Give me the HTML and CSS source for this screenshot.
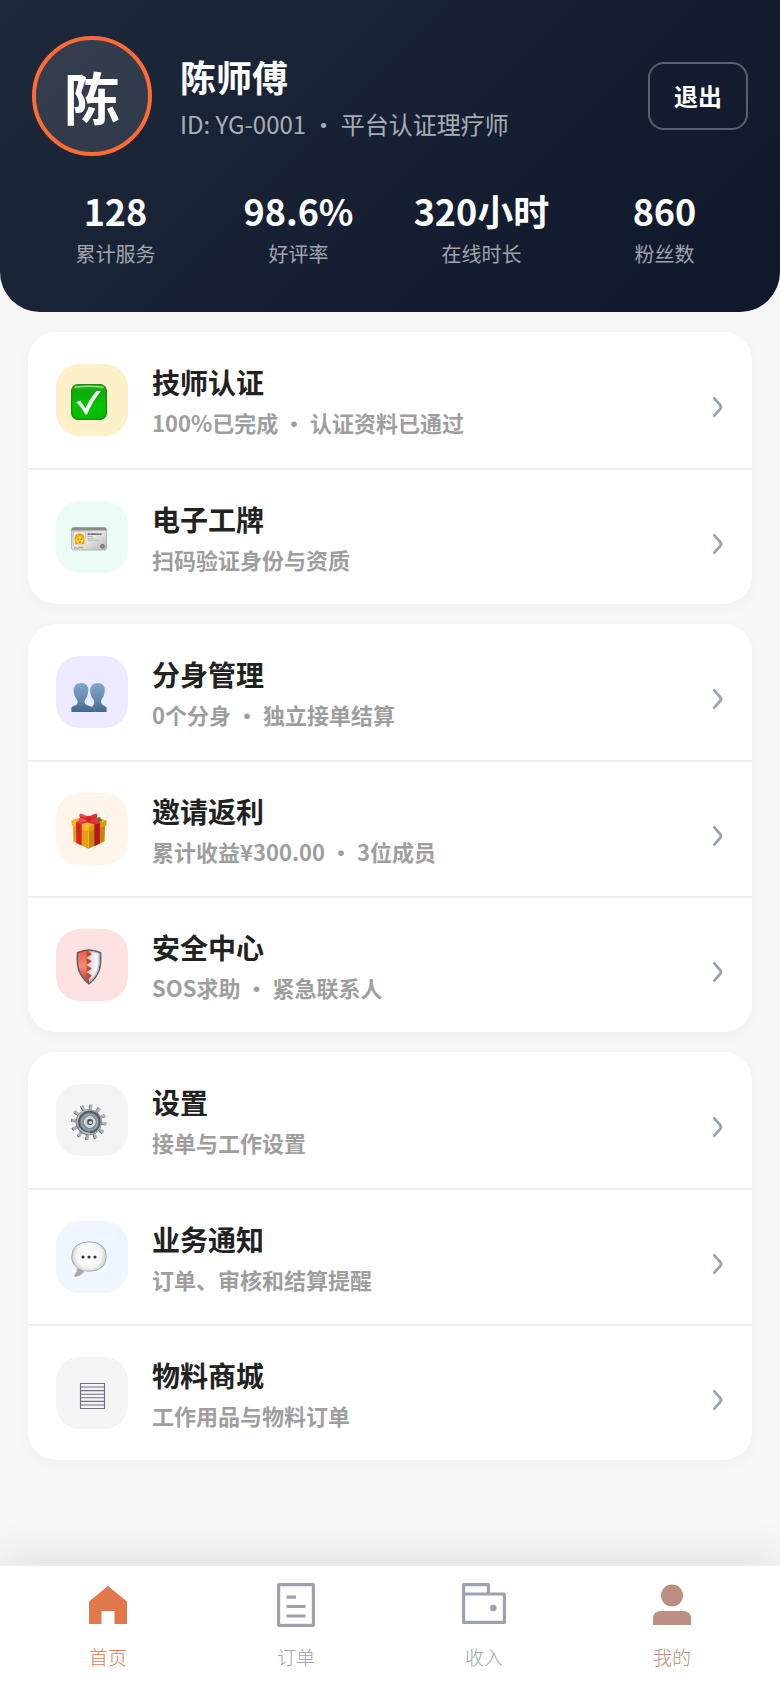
FILE: index.html
```html
<!DOCTYPE html>
<html lang="zh-CN">
<head>
    <meta charset="UTF-8">
    <meta name="viewport" content="width=device-width, initial-scale=1.0">
    <title>我的</title>
    <link rel="stylesheet" href="styles.css">
</head>
<body>
    <!-- Shared chevron -->
    <svg class="sprite" aria-hidden="true">
        <symbol id="chevron" viewBox="0 0 12 22">
            <path d="M2.3 2.3 Q5 5.5 8.2 9 Q9.7 11 8.2 13 Q5 16.5 2.3 19.7" fill="none" stroke="#9ca3af" stroke-width="2.8" stroke-linecap="round" stroke-linejoin="round"/>
        </symbol>
    </svg>

    <header class="profile">
        <div class="profile-top">
            <div class="avatar">陈</div>
            <div class="profile-info">
                <h1 class="profile-name">陈师傅</h1>
                <p class="profile-id">ID: YG-0001 ・ 平台认证理疗师</p>
            </div>
            <button class="logout-btn" type="button">退出</button>
        </div>
        <div class="stats">
            <div class="stat"><strong>128</strong><span>累计服务</span></div>
            <div class="stat"><strong>98.6%</strong><span>好评率</span></div>
            <div class="stat"><strong>320小时</strong><span>在线时长</span></div>
            <div class="stat"><strong>860</strong><span>粉丝数</span></div>
        </div>
    </header>

    <main class="menu">
        <section class="card">
            <a class="row" href="#cert">
                <span class="tile tile-yellow">
                    <svg viewBox="0 0 36 36" aria-hidden="true">
                        <defs>
                            <linearGradient id="okFill" x1="0" y1="0" x2="0" y2="1">
                                <stop offset="0" stop-color="#35b52f"/>
                                <stop offset=".2" stop-color="#10a80d"/>
                                <stop offset=".6" stop-color="#00c400"/>
                                <stop offset="1" stop-color="#00b900"/>
                            </linearGradient>
                        </defs>
                        <rect x=".6" y=".6" width="34.8" height="34.8" rx="6.5" fill="url(#okFill)" stroke="#168a13" stroke-width="1.2"/>
                        <path d="M4 3.2 Q18 1.2 32 3.2" fill="none" stroke="#8fdc86" stroke-width="1.6" stroke-linecap="round"/>
                        <path d="M5.5 18.2 L9.2 16.4 L14.6 24.2 Q19 14 25.8 7 L30 7 Q21.5 17 16 30.5 L14.4 30.5 Q10.5 23 5.5 18.2Z" fill="#fff"/>
                    </svg>
                </span>
                <span class="row-text">
                    <span class="row-title">技师认证</span>
                    <span class="row-sub">100%已完成 ・ 认证资料已通过</span>
                </span>
                <svg class="chevron" aria-hidden="true"><use href="#chevron"/></svg>
            </a>
            <a class="row" href="#badge">
                <span class="tile tile-mint">
                    <svg viewBox="0 0 36 36" aria-hidden="true">
                        <defs>
                            <linearGradient id="idFill" x1="0" y1="0" x2="1" y2="1">
                                <stop offset="0" stop-color="#c2c2c2"/>
                                <stop offset=".5" stop-color="#e9e9e9"/>
                                <stop offset="1" stop-color="#b5b5b5"/>
                            </linearGradient>
                        </defs>
                        <rect x=".5" y="6.5" width="35" height="22.5" rx="2" fill="url(#idFill)" stroke="#aaa" stroke-width=".8"/>
                        <path d="M.6 9.5 V8.4 Q.6 6.4 2.5 6.4 H33.5 Q35.4 6.4 35.4 8.4 V9.5Z" fill="#8c8c8c"/>
                        <rect x="2.6" y="11" width="12" height="14" fill="#fafafa" stroke="#bbb" stroke-width=".5"/>
                        <path d="M3.8 23.5 V17 Q3.8 12.3 8.7 12.3 Q13.6 12.3 13.6 17 V23.5Z" fill="#eda50e"/>
                        <ellipse cx="8.7" cy="18.4" rx="3.6" ry="4.2" fill="#ffd33d"/>
                        <path d="M5.2 16.8 Q7 15.8 8.7 14.3 Q10.5 16 12.2 16.8" fill="none" stroke="#d98a08" stroke-width=".9"/>
                        <circle cx="7.3" cy="18" r=".6" fill="#6b3e08"/>
                        <circle cx="10.2" cy="18" r=".6" fill="#6b3e08"/>
                        <path d="M7.4 20.7 Q8.7 21.7 10 20.7" fill="none" stroke="#b03a20" stroke-width=".7"/>
                        <path d="M16.5 13.2 H30.5" stroke="#444" stroke-width="1.2" stroke-dasharray="3 .4 5 .3"/>
                        <path d="M16.5 15.5 H22 M16.5 17.4 H23 M16.5 19.2 H28" stroke="#999" stroke-width=".6"/>
                        <path d="M3 27.3 L5 26.6 L6 27.4 L8.5 26.6 L12 26.9" fill="none" stroke="#555" stroke-width=".6"/>
                        <circle cx="31.5" cy="25.3" r="2.4" fill="#777"/>
                        <circle cx="31.5" cy="25.3" r="1" fill="#999"/>
                    </svg>
                </span>
                <span class="row-text">
                    <span class="row-title">电子工牌</span>
                    <span class="row-sub">扫码验证身份与资质</span>
                </span>
                <svg class="chevron" aria-hidden="true"><use href="#chevron"/></svg>
            </a>
        </section>

        <section class="card">
            <a class="row" href="#clones">
                <span class="tile tile-violet">
                    <svg viewBox="0 -4 36 36" aria-hidden="true">
                        <defs>
                            <linearGradient id="userFill" x1="0" y1="0" x2="0" y2="1">
                                <stop offset="0" stop-color="#7fa8c9"/>
                                <stop offset=".6" stop-color="#6089ac"/>
                                <stop offset="1" stop-color="#41658b"/>
                            </linearGradient>
                        </defs>
                        <path d="M26.5 3 Q34 3 33.8 11 Q33.4 16.5 30.2 20.2 Q29.6 23.8 32 25 L35.6 27.2 V32 H16 L22.5 25 Q24 23 22.8 20.2 Q19.4 16.5 19.2 11 Q19.2 3 26.5 3Z" fill="url(#userFill)"/>
                        <path d="M10 3 Q17.6 3 17.4 11 Q17 16.5 13.8 20.2 Q13 23.5 15.4 24.8 L21.4 27.2 Q24.2 28.8 24.4 32 H.4 V28 Q.4 26.8 2 26.2 L5.2 24.8 Q7.2 23.5 6.2 20.2 Q3 16.5 2.6 11 Q2.6 3 10 3Z" fill="url(#userFill)"/>
                        <path d="M19.5 26.2 Q23.8 27.6 24.6 31.8" fill="none" stroke="#7595b2" stroke-width=".6"/>
                    </svg>
                </span>
                <span class="row-text">
                    <span class="row-title">分身管理</span>
                    <span class="row-sub">0个分身 ・ 独立接单结算</span>
                </span>
                <svg class="chevron" aria-hidden="true"><use href="#chevron"/></svg>
            </a>
            <a class="row" href="#invite">
                <span class="tile tile-orange">
                    <svg viewBox="0 0 36 36" aria-hidden="true">
                        <path d="M2 12 L17.5 18 V35.8 L2.4 28.5Z" fill="#e2a00d"/>
                        <path d="M17.5 18 L34 12 L33.6 28.3 L17.5 35.8Z" fill="#c98406"/>
                        <path d="M.4 7.2 L17.5 2.5 L35.6 7.2 L17.8 13.4Z" fill="#f0b41c"/>
                        <path d="M.4 7.2 L17.5 13.4 V18.6 L.8 12.6Z" fill="#f5b81b"/>
                        <path d="M17.5 13.4 L35.6 7.2 L35.3 12.6 L17.5 18.6Z" fill="#dc9a0b"/>
                        <path d="M5 9 L10.6 11 V32.5 L5.4 30Z" fill="#d91f2b"/>
                        <path d="M23.3 11.4 L29 9.4 L28.8 30.6 L23.3 33.2Z" fill="#b5151f"/>
                        <path d="M5 9 L22 4.5 L27 5.8 L10.6 11Z M12 5 L29 9.4 L23.3 11.4 L7 6.6Z" fill="#e32735"/>
                        <path d="M24 5.2 L29 3.9 L31 8 L27 9.3Z" fill="#4f7620"/>
                        <path d="M17.8 4.2 Q12 .2 8.7 .7 Q7.7 2.2 9 4.2 Q8.4 7.2 6.9 9 Q11.8 10.8 17.8 6.8Z" fill="#f04450"/>
                        <path d="M17.5 4.2 Q22.6 .1 26.1 .8 Q27.1 2.2 25.7 4.2 Q26.8 7 28.4 9.1 Q22.6 10.6 17.5 7Z" fill="#e83642"/>
                        <path d="M9.5 4 Q12.5 5.6 16.5 5.4 M25.6 4 Q22.3 5.6 18.6 5.4" fill="none" stroke="#bb1525" stroke-width=".9"/>
                        <ellipse cx="17.6" cy="6" rx="2.6" ry="3" fill="#d61f30"/>
                        <path d="M17.5 19 V35" stroke="#f2c04a" stroke-width=".6"/>
                    </svg>
                </span>
                <span class="row-text">
                    <span class="row-title">邀请返利</span>
                    <span class="row-sub">累计收益¥300.00 ・ 3位成员</span>
                </span>
                <svg class="chevron" aria-hidden="true"><use href="#chevron"/></svg>
            </a>
            <a class="row" href="#safety">
                <span class="tile tile-red">
                    <svg viewBox="0 0 36 36" aria-hidden="true">
                        <defs>
                            <linearGradient id="shieldL" x1="0" y1="0" x2="0" y2="1">
                                <stop offset="0" stop-color="#e85c49"/>
                                <stop offset=".5" stop-color="#f58a76"/>
                                <stop offset="1" stop-color="#b93120"/>
                            </linearGradient>
                            <linearGradient id="shieldR" x1="0" y1="0" x2="1" y2="0">
                                <stop offset="0" stop-color="#b9bec3"/>
                                <stop offset=".5" stop-color="#d4d7da"/>
                                <stop offset=".8" stop-color="#f7f8fa"/>
                                <stop offset="1" stop-color="#cfd3d8"/>
                            </linearGradient>
                        </defs>
                        <path d="M18 .8 Q23.5 .8 29.6 3.6 Q30.4 14 28.4 21 Q25.3 29.5 18 35 Q10.7 29.5 7.6 21 Q5.6 14 6.4 3.6 Q12.5 .8 18 .8Z" fill="url(#shieldR)"/>
                        <path d="M18 1.2 Q12.5 1.2 7 4 Q6.2 14 8.2 21 Q11.2 29 18 34.2 V30 L20.8 26.5 L15.8 23.2 L20.8 19.4 L15.8 16 L20.8 12.2 L15.8 8.8 L20.8 5.3Z" fill="url(#shieldL)"/>
                        <path d="M15.5 2 L20.8 5.3 L14.8 8.8 L20.8 12.2 L14.8 16 L20.8 19.4 L14.8 23.2 L20.8 26.5 L15.6 30" fill="#c94632"/>
                        <path d="M18 .9 Q23.5 .9 29.5 3.7 Q30.3 14 28.3 21 Q25.2 29.4 18 34.8 Q10.8 29.4 7.7 21 Q5.7 14 6.5 3.7 Q12.5 .9 18 .9Z" fill="none" stroke="#5d6062" stroke-width="1.5"/>
                        <path d="M18 2.3 Q23 2.3 28.2 4.7 Q28.9 14 27 20.6 Q24.2 28.2 18 33" fill="none" stroke="#a7abaf" stroke-width=".9"/>
                    </svg>
                </span>
                <span class="row-text">
                    <span class="row-title">安全中心</span>
                    <span class="row-sub">SOS求助 ・ 紧急联系人</span>
                </span>
                <svg class="chevron" aria-hidden="true"><use href="#chevron"/></svg>
            </a>
        </section>

        <section class="card">
            <a class="row" href="#settings">
                <span class="tile tile-gray">
                    <svg viewBox="0 0 36 36" aria-hidden="true">
                        <defs>
                            <linearGradient id="gearFill" x1="0" y1="0" x2="1" y2="1">
                                <stop offset="0" stop-color="#c8d0d7"/>
                                <stop offset=".5" stop-color="#8b959d"/>
                                <stop offset="1" stop-color="#bcc4ca"/>
                            </linearGradient>
                        </defs>
                        <!-- 12 teeth, dark copy gives the thickness -->
                        <circle cx="17.4" cy="18.4" r="15.2" fill="none" stroke="#594f4b" stroke-width="5" stroke-dasharray="2.8 5.16"/>
                        <circle cx="18" cy="18" r="15.2" fill="none" stroke="#aab5bf" stroke-width="5" stroke-dasharray="2.8 5.16"/>
                        <circle cx="17.7" cy="18.2" r="13" fill="#666b6f"/>
                        <circle cx="18" cy="18" r="12.7" fill="url(#gearFill)"/>
                        <circle cx="18.4" cy="18" r="10.4" fill="#7d878d" stroke="#515a60" stroke-width="1.6"/>
                        <circle cx="18.6" cy="18.2" r="7.8" fill="none" stroke="#98a2a8" stroke-width="1.6"/>
                        <circle cx="18.8" cy="18" r="5.3" fill="#c6d0d8" stroke="#eaf0f4" stroke-width="1"/>
                        <circle cx="19" cy="18" r="2.9" fill="#4e4a4b"/>
                        <circle cx="19.5" cy="18.6" r="1.6" fill="#f4f6f8"/>
                        <path d="M8.5 24 Q12 29.3 19 29.2" fill="none" stroke="#d8dfe3" stroke-width="1"/>
                    </svg>
                </span>
                <span class="row-text">
                    <span class="row-title">设置</span>
                    <span class="row-sub">接单与工作设置</span>
                </span>
                <svg class="chevron" aria-hidden="true"><use href="#chevron"/></svg>
            </a>
            <a class="row" href="#notice">
                <span class="tile tile-blue">
                    <svg viewBox="0 0 36 36" aria-hidden="true">
                        <defs>
                            <radialGradient id="bubbleFill" cx=".5" cy=".4" r=".6">
                                <stop offset="0" stop-color="#fff"/>
                                <stop offset=".6" stop-color="#f4f4f4"/>
                                <stop offset="1" stop-color="#b4b4b4"/>
                            </radialGradient>
                        </defs>
                        <path d="M18 .7 Q35.3 1.5 35.3 15.8 Q34.7 29.5 19 30.2 Q15.5 30.2 13.6 29.5 Q10.5 34.8 4 35.4 Q3.2 35 4.4 33.6 Q6.8 30.6 6.4 26.8 Q.7 22.5 .7 15.8 Q.9 1.5 18 .7Z" fill="url(#bubbleFill)" stroke="#aaa" stroke-width="1"/>
                        <path d="M6.9 27.6 Q7 31.8 4.2 34.8 Q10.2 33.8 12.6 29.2Z" fill="#a6a6a6"/>
                        <circle cx="12" cy="16" r="1.6" fill="#333"/>
                        <circle cx="18" cy="16" r="1.6" fill="#333"/>
                        <circle cx="24" cy="16" r="1.6" fill="#333"/>
                    </svg>
                </span>
                <span class="row-text">
                    <span class="row-title">业务通知</span>
                    <span class="row-sub">订单、审核和结算提醒</span>
                </span>
                <svg class="chevron" aria-hidden="true"><use href="#chevron"/></svg>
            </a>
            <a class="row" href="#shop">
                <span class="tile tile-gray tile-center">
                    <svg viewBox="0 -1 36 36" aria-hidden="true">
                        <path d="M6.5 5.5 H30.5 V30.5 H6.5Z M6.5 9 H30.5 M6.5 12.6 H30.5 M6.5 16.2 H30.5 M6.5 19.8 H30.5 M6.5 23.4 H30.5 M6.5 27 H30.5" fill="none" stroke="#6b7280" stroke-width="1.1"/>
                    </svg>
                </span>
                <span class="row-text">
                    <span class="row-title">物料商城</span>
                    <span class="row-sub">工作用品与物料订单</span>
                </span>
                <svg class="chevron" aria-hidden="true"><use href="#chevron"/></svg>
            </a>
        </section>
    </main>

    <nav class="tabbar">
        <a class="tab tab-home" href="#home">
            <svg viewBox="0 0 48 48" aria-hidden="true">
                <path d="M24 5 L43 20.5 V43 H30.5 V30 H17.5 V43 H5 V20.5Z" fill="currentColor"/>
            </svg>
            <span>首页</span>
        </a>
        <a class="tab" href="#orders">
            <svg viewBox="0 0 48 48" aria-hidden="true">
                <rect x="6.6" y="3.6" width="34.8" height="40.8" rx=".5" fill="none" stroke="currentColor" stroke-width="3.2"/>
                <path d="M14.5 16.2 H24 M14.5 25.5 H33.5 M14.5 35 H33.5" stroke="currentColor" stroke-width="3.2"/>
            </svg>
            <span>订单</span>
        </a>
        <a class="tab" href="#income">
            <svg viewBox="0 0 48 48" aria-hidden="true">
                <path d="M3.6 13 H44.4 V41.4 H3.6Z M3.6 13 V3.6 H28.4 V13" fill="none" stroke="currentColor" stroke-width="3.2" stroke-linejoin="round"/>
                <circle cx="33.3" cy="27" r="3.3" fill="currentColor"/>
            </svg>
            <span>收入</span>
        </a>
        <a class="tab tab-mine" href="#mine">
            <svg viewBox="0 0 48 48" aria-hidden="true">
                <circle cx="24" cy="14.5" r="11" fill="currentColor"/>
                <path d="M5 44 V38 Q5 30 13 30 H35 Q43 30 43 38 V44Z" fill="currentColor"/>
            </svg>
            <span>我的</span>
        </a>
    </nav>
</body>
</html>
```

FILE: styles.css
```css
* {
    box-sizing: border-box;
}

body {
    margin: 0;
    min-height: 100vh;
    display: flex;
    flex-direction: column;
    background: #f7f7f5;
    color: #222;
    font-family: "Noto Sans CJK SC", "Noto Sans", sans-serif;
}

a {
    color: inherit;
    text-decoration: none;
}

.sprite {
    display: none;
}

/* Profile header */
.profile {
    padding: 36px 32px 44px;
    border-radius: 0 0 40px 40px;
    background: linear-gradient(135deg, #1e293b 0%, #0f172a 100%);
    color: #fff;
}

.profile-top {
    display: flex;
    align-items: center;
    gap: 28px;
}

.avatar {
    display: flex;
    align-items: center;
    justify-content: center;
    width: 120px;
    height: 120px;
    padding-bottom: 2px;
    border: 4px solid #ff6b35;
    border-radius: 50%;
    background: rgba(255, 255, 255, 0.1);
    font-size: 56px;
    font-weight: 700;
}

.profile-info {
    flex: 1;
}

.profile-name {
    margin: 0 0 4px;
    font-size: 36px;
    line-height: 52px;
    font-weight: 700;
}

.profile-id {
    margin: 0;
    font-size: 24px;
    line-height: 36px;
    color: rgba(255, 255, 255, 0.65);
}

.logout-btn {
    padding: 14px 24px;
    border: 2px solid rgba(255, 255, 255, 0.3);
    border-radius: 16px;
    background: transparent;
    color: #fff;
    font-family: inherit;
    font-size: 24px;
    line-height: 36px;
    font-weight: 700;
    cursor: pointer;
}

.stats {
    display: grid;
    grid-template-columns: repeat(4, 1fr);
    gap: 16px;
    margin-top: 32px;
}

.stat {
    display: flex;
    flex-direction: column;
    align-items: center;
    gap: 8px;
}

.stat strong {
    font-size: 36px;
    line-height: 44px;
    white-space: nowrap;
}

.stat span {
    font-size: 20px;
    line-height: 28px;
    color: rgba(255, 255, 255, 0.6);
}

/* Menu cards */
.menu {
    display: flex;
    flex-direction: column;
    gap: 20px;
    padding: 20px 28px 40px;
}

.card {
    border-radius: 28px;
    background: #fff;
    box-shadow: 0 4px 16px rgba(0, 0, 0, 0.03);
}

.row {
    display: flex;
    align-items: center;
    gap: 24px;
    min-height: 136px;
    padding: 0 28px;
}

.row + .row {
    border-top: 2px solid #efefec;
}

.tile {
    display: flex;
    align-items: center;
    justify-content: center;
    width: 72px;
    height: 72px;
    padding: 4px 6px 0 0;
    border-radius: 24px;
}

.tile-center {
    padding: 4px 0 0;
}

.tile svg {
    width: 36px;
    height: 36px;
}

.tile-yellow { background: #fef0c7; }
.tile-mint { background: #eafcf5; }
.tile-violet { background: #ede9fe; }
.tile-orange { background: #fff5eb; }
.tile-red { background: #fee2e2; }
.tile-gray { background: #f3f4f6; }
.tile-blue { background: #eff6ff; }

.row-text {
    flex: 1;
    display: flex;
    flex-direction: column;
}

.row-title {
    font-size: 28px;
    line-height: 44px;
    font-weight: 700;
}

.row-sub {
    font-size: 22px;
    line-height: 36px;
    font-weight: 700;
    color: #9e9e9e;
}

.chevron {
    width: 12px;
    height: 36px;
    padding-top: 14px;
}

/* Bottom tabs */
.tabbar {
    position: sticky;
    bottom: 0;
    display: grid;
    grid-template-columns: repeat(4, 1fr);
    margin-top: auto;
    padding: 15px 14px 17px;
    border-top: 2px solid #efefec;
    background: #fff;
    box-shadow: 0 -8px 40px rgba(0, 0, 0, 0.09);
}

.tab {
    display: flex;
    flex-direction: column;
    align-items: center;
    gap: 14px;
    color: #9ca3af;
    font-family: "Kaiti SC", KaiTi, "Noto Sans CJK SC", serif;
    font-size: 19px;
    line-height: 28px;
    font-weight: 300;
}

.tab svg {
    width: 48px;
    height: 48px;
}

.tab-home { color: #e0784b; }
.tab-mine { color: #bc8f82; }
```
